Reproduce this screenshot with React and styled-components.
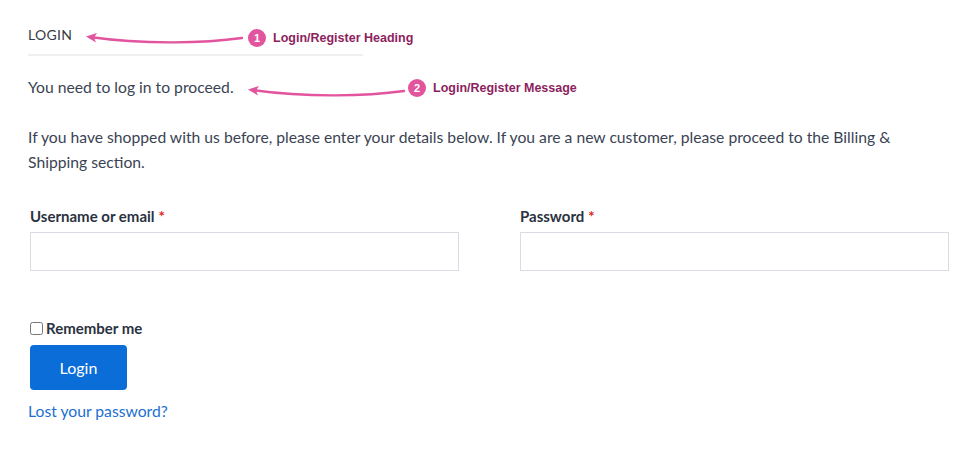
import React from 'react'
import styled, { createGlobalStyle } from 'styled-components'

const GlobalStyle = createGlobalStyle`
  html, body {
    margin: 0;
    padding: 0;
    background: #fff;
  }
  body {
    font-family: Lato, "Noto Sans", sans-serif;
    color: #3a4353;
  }
`

const Page = styled.div`
  position: relative;
  width: 979px;
  height: 476px;
  padding: 25px 28px 0 28px;
  box-sizing: border-box;
`

const Heading = styled.h3`
  margin: 0;
  width: 335px;
  padding-bottom: 9px;
  border-bottom: 2px solid #eeeff1;
  font-size: 14px;
  font-weight: 400;
  letter-spacing: 0.3px;
  text-transform: uppercase;
  color: #353c47;
  line-height: 20px;
`

const Text = styled.p`
  margin: ${p => p.top || 0}px 0 0 0;
  font-size: 15.7px;
  line-height: 25px;
  color: #3a4353;
`

const Fields = styled.div`
  display: grid;
  grid-template-columns: 429px 429px;
  column-gap: 61px;
  margin: 31px 0 0 2px;
`

const Field = styled.div`
  display: flex;
  flex-direction: column;
  gap: 6px;
`

const Label = styled.label`
  font-size: 15px;
  font-weight: 700;
  color: #2b3240;
  line-height: 20px;
  display: flex;
  align-items: center;
  gap: 4px;
`

const Required = styled.span`
  color: #e2231a;
`

const Input = styled.input`
  box-sizing: border-box;
  width: 100%;
  height: 39px;
  border: 1px solid #d9dce3;
  border-radius: 0;
  background: #fff;
  outline: none;
`

const Remember = styled.label`
  display: flex;
  align-items: center;
  gap: 3px;
  margin: 48px 0 0 2px;
  font-size: 15px;
  font-weight: 700;
  color: #2b3240;
  input {
    margin: 0;
    width: 13px;
    height: 13px;
  }
`

const Button = styled.button`
  margin: 8px 0 0 2px;
  width: 97px;
  height: 45px;
  border: none;
  border-radius: 4px;
  background: #0a6dd8;
  color: #fff;
  font-family: inherit;
  font-size: 16px;
  padding-bottom: 2px;
  cursor: pointer;
`

const LostLink = styled.a`
  display: block;
  margin-top: 12px;
  font-size: 15.7px;
  color: #1c6fd1;
  text-decoration: none;
`

const Note = styled.div`
  position: absolute;
  left: ${p => p.x}px;
  top: ${p => p.y}px;
  display: flex;
  align-items: center;
  gap: 7px;
  font-family: "Liberation Sans", Arial, sans-serif;
  font-size: 12.5px;
  font-weight: 700;
  color: #8c1f5e;
`

const Badge = styled.span`
  width: 18px;
  height: 18px;
  border-radius: 50%;
  background: #e2549e;
  color: #fff;
  font-size: 11px;
  display: flex;
  align-items: center;
  justify-content: center;
`

const Arrow = styled.svg`
  position: absolute;
  left: ${p => p.x}px;
  top: ${p => p.y}px;
  overflow: visible;
`

const CurvedArrow = ({ x, y }) => (
  <Arrow x={x} y={y} width="158" height="14" viewBox="0 0 158 14">
    <path
      d="M156 3 C 120 8, 60 10, 4 2"
      fill="none"
      stroke="#e2549e"
      strokeWidth="2.4"
      strokeLinecap="round"
    />
    <path d="M0 1.5 L 11 -2 L 8 2.5 L 10 7.5 Z" fill="#e2549e" />
  </Arrow>
)

export default function App() {
  return (
    <>
      <GlobalStyle />
      <Page>
        <Heading>Login</Heading>
        <Text top={19}>You need to log in to proceed.</Text>
        <Text top={25}>
          If you have shopped with us before, please enter your details below. If you are a new customer, please proceed to the Billing &amp; Shipping section.
        </Text>

        <Fields>
          <Field>
            <Label>Username or email <Required>*</Required></Label>
            <Input type="text" />
          </Field>
          <Field>
            <Label>Password <Required>*</Required></Label>
            <Input type="password" />
          </Field>
        </Fields>

        <Remember>
          <input type="checkbox" />
          Remember me
        </Remember>
        <Button>Login</Button>
        <LostLink href="#">Lost your password?</LostLink>

        <CurvedArrow x={86} y={35} />
        <Note x={248} y={29}><Badge>1</Badge>Login/Register Heading</Note>
        <CurvedArrow x={248} y={88} />
        <Note x={408} y={79}><Badge>2</Badge>Login/Register Message</Note>
      </Page>
    </>
  )
}
